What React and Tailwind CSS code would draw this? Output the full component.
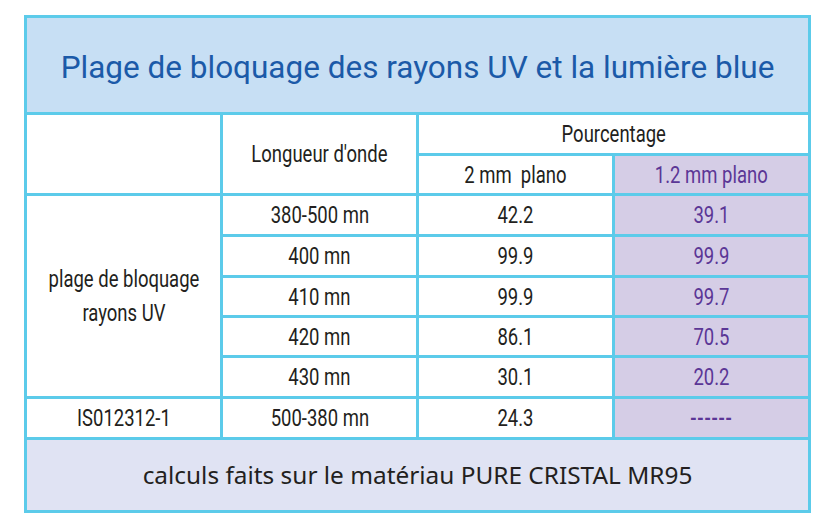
const cond = "font-['Roboto',sans-serif] text-[24px] text-[#231f20]";

const rows = [
  { range: "380-500 mn", a: "42.2", b: "39.1" },
  { range: "400 mn", a: "99.9", b: "99.9" },
  { range: "410 mn", a: "99.9", b: "99.7" },
  { range: "420 mn", a: "86.1", b: "70.5" },
  { range: "430 mn", a: "30.1", b: "20.2" },
];

function Cell({ className = "", children }) {
  return (
    <div className={"flex items-center justify-center text-center leading-none " + className}>
      <span className="inline-block scale-x-[0.77] whitespace-pre">{children}</span>
    </div>
  );
}

export default function App() {
  return (
    <div className="min-h-screen w-full bg-white pt-[15px] pl-[24px]">
      <div
        className={
          "grid w-[787px] grid-cols-[193px_193px_193px_193px] grid-rows-[94px_38px_37px_38px_38px_37px_37px_38px_38px_70px] gap-[3px] bg-[#5ccbea] p-[3px] " +
          cond
        }
      >
        {/* title */}
        <div className="col-span-4 flex items-center justify-center bg-[#c7dff4] pt-[5px] font-['Roboto',sans-serif] text-[31.5px] leading-none text-[#1b5aa8]">
          Plage de bloquage des rayons UV et la lumière blue
        </div>

        {/* header rows */}
        <div className="row-span-2 bg-white" />
        <Cell className="row-span-2 bg-white">Longueur d'onde</Cell>
        <Cell className="col-span-2 bg-white">Pourcentage</Cell>
        <Cell className="bg-white">2 mm  plano</Cell>
        <Cell className="bg-[#d5cde6] text-[#5b3696]">1.2 mm plano</Cell>

        {/* UV block */}
        <div className="row-span-5 flex items-center justify-center bg-white text-center leading-[34px]">
          <span className="inline-block scale-x-[0.77] whitespace-nowrap">
            plage de bloquage
            <br />
            rayons UV
          </span>
        </div>
        {rows.map((r) => (
          <div key={r.range} className="contents">
            <Cell className="bg-white">{r.range}</Cell>
            <Cell className="bg-white">{r.a}</Cell>
            <Cell className="bg-[#d5cde6] text-[#5b3696]">{r.b}</Cell>
          </div>
        ))}

        {/* ISO row */}
        <Cell className="bg-white">IS012312-1</Cell>
        <Cell className="bg-white">500-380 mn</Cell>
        <Cell className="bg-white">24.3</Cell>
        <Cell className="bg-[#d5cde6] font-medium tracking-[1px] text-[#5b3696]">------</Cell>

        {/* footer */}
        <div className="col-span-4 flex items-center justify-center bg-[#e0e3f3] font-['Noto_Sans',sans-serif] text-[24.4px] leading-none text-[#231f20]">
          calculs faits sur le matériau PURE CRISTAL MR95
        </div>
      </div>
    </div>
  );
}
